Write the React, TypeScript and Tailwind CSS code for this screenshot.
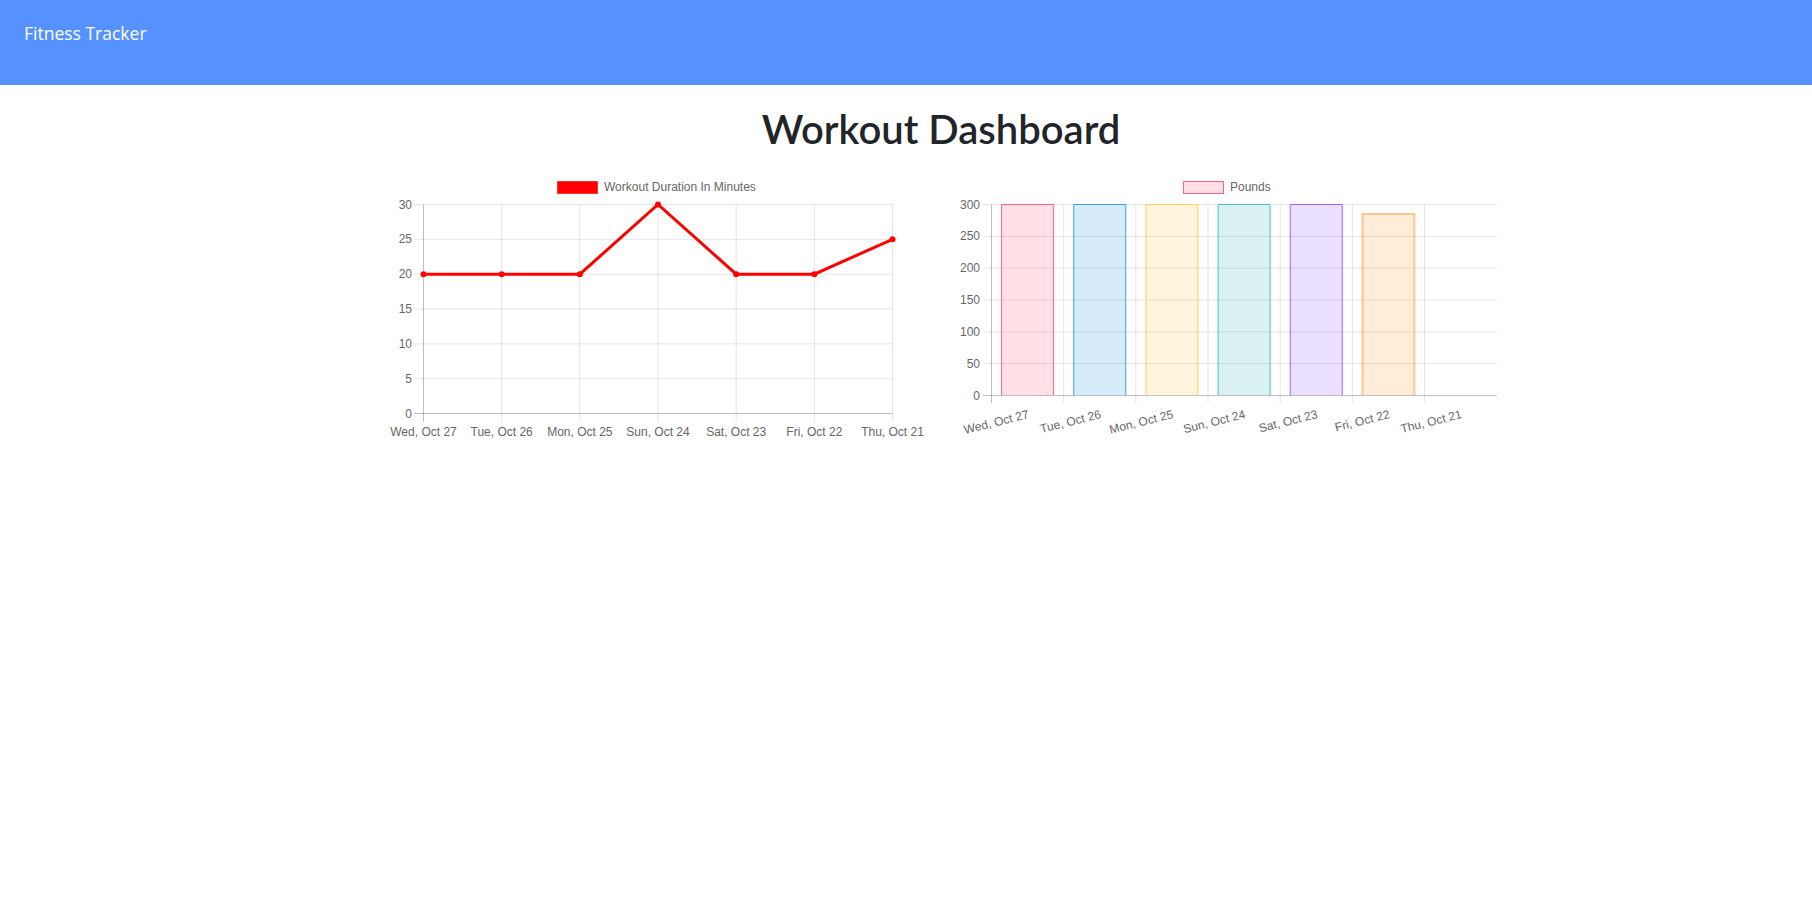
import React from "react";

const days = ["Wed, Oct 27", "Tue, Oct 26", "Mon, Oct 25", "Sun, Oct 24", "Sat, Oct 23", "Fri, Oct 22", "Thu, Oct 21"];
const minutes = [20, 20, 20, 30, 20, 20, 25];
const pounds = [300, 300, 300, 300, 300, 285];

const barColors = [
  { fill: "rgba(255,99,132,0.2)", stroke: "rgba(255,99,132,1)", w: 1 },
  { fill: "rgba(54,162,235,0.2)", stroke: "rgba(54,162,235,1)", w: 1 },
  { fill: "rgba(255,206,86,0.2)", stroke: "rgba(255,206,86,1)", w: 1 },
  { fill: "rgba(75,192,192,0.2)", stroke: "rgba(75,192,192,1)", w: 1 },
  { fill: "rgba(153,102,255,0.2)", stroke: "rgba(153,102,255,1)", w: 1 },
  { fill: "rgba(255,159,64,0.2)", stroke: "rgba(255,159,64,0.55)", w: 2 },
];

const grid = "rgba(0,0,0,0.1)";
const zero = "rgba(0,0,0,0.25)";
const label = "#666";
const font = "'Liberation Sans', Arial, sans-serif";

function DurationChart() {
  const left = 423.5;
  const step = 78.17;
  const bottom = 414.5;
  const unit = 209 / 30;
  const xs = days.map((_, i) => left + i * step);
  const right = xs[xs.length - 1];
  const pts = minutes.map((v, i) => [xs[i], bottom - v * unit]);

  return (
    <svg width={540} height={270} viewBox="386 176 540 270" style={{ fontFamily: font }}>
      {/* legend */}
      <rect x={557.5} y={182.5} width={40} height={12} fill="#ff0000" stroke="rgba(255,0,0,0.6)" />
      <text x={604} y={192} fontSize={12} fill={label}>Workout Duration In Minutes</text>

      {[0, 5, 10, 15, 20, 25, 30].map((v) => {
        const y = bottom - v * unit;
        return (
          <g key={v}>
            <line x1={414} x2={right} y1={y} y2={y} stroke={v === 0 ? zero : grid} />
            <text x={412} y={y + 4} fontSize={12} fill={label} textAnchor="end">{v}</text>
          </g>
        );
      })}
      {xs.map((x, i) => (
        <g key={days[i]}>
          <line x1={x} x2={x} y1={205.5} y2={423} stroke={i === 0 ? zero : grid} />
          <text x={x} y={437} fontSize={12} fill={label} textAnchor="middle">{days[i]}</text>
        </g>
      ))}

      <polyline points={pts.map((p) => p.join(",")).join(" ")} fill="none" stroke="#ff0000" strokeWidth={3} />
      {pts.map(([x, y], i) => (
        <circle key={i} cx={x} cy={y} r={3} fill="#ff0000" />
      ))}
    </svg>
  );
}

function PoundsChart() {
  const left = 991.5;
  const step = 72.17;
  const bottom = 396.5;
  const right = 1496.7;
  const unit = 191 / 300;
  const barW = 52;

  return (
    <svg width={550} height={270} viewBox="952 176 550 270" style={{ fontFamily: font }}>
      {/* legend */}
      <rect x={1183.5} y={182.5} width={40} height={12} fill="rgba(255,99,132,0.2)" stroke="rgba(255,99,132,1)" />
      <text x={1230} y={192} fontSize={12} fill={label}>Pounds</text>

      {[0, 50, 100, 150, 200, 250, 300].map((v) => {
        const y = bottom - v * unit;
        return (
          <g key={v}>
            <line x1={983} x2={right} y1={y} y2={y} stroke={v === 0 ? zero : grid} />
            <text x={980} y={y + 4} fontSize={12} fill={label} textAnchor="end">{v}</text>
          </g>
        );
      })}
      {days.map((d, i) => {
        const x = left + i * step;
        return <line key={d} x1={x} x2={x} y1={205.5} y2={404} stroke={i === 0 ? zero : grid} />;
      })}

      {pounds.map((v, i) => {
        const c = left + step * (i + 0.5);
        const top = bottom - v * unit;
        const col = barColors[i];
        const x0 = c - barW / 2;
        const x1 = c + barW / 2;
        return (
          <g key={i}>
            <rect x={x0} y={top} width={barW} height={bottom - top} fill={col.fill} />
            <path d={`M${x0} ${bottom} V${top} H${x1} V${bottom}`} fill="none" stroke={col.stroke} strokeWidth={col.w} />
          </g>
        );
      })}

      {days.map((d, i) => {
        const c = left + step * (i + 0.5) + 1;
        return (
          <text
            key={d}
            x={c}
            y={415}
            fontSize={12}
            fill={label}
            textAnchor="end"
            dominantBaseline="central"
            transform={`rotate(-14 ${c} 415)`}
          >
            {d}
          </text>
        );
      })}
    </svg>
  );
}

export default function App() {
  return (
    <div className="min-h-screen bg-white">
      <nav className="h-[85px] bg-[#5692ff] pl-6 pt-[20px]">
        <span className="font-['Open_Sans',sans-serif] text-[17.5px] leading-[27px] text-white">Fitness Tracker</span>
      </nav>

      <div className="pl-[70px]">
        <h1 className="mt-[20px] text-center font-['Lato',sans-serif] text-[40px] font-semibold leading-[48px] text-[#212529]">
          Workout Dashboard
        </h1>
      </div>

      <div className="mt-[22px] flex gap-[26px] pl-[386px]">
        <DurationChart />
        <PoundsChart />
      </div>
    </div>
  );
}
